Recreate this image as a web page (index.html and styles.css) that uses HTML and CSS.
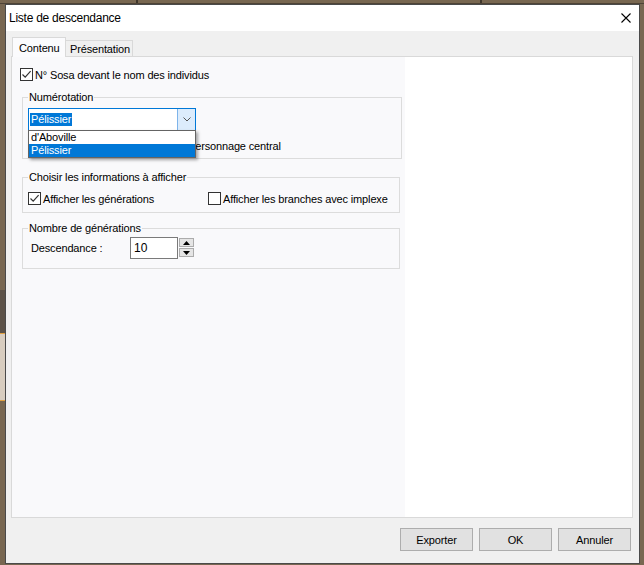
FILE: index.html
```html
<!DOCTYPE html>
<html lang="fr">
<head>
<meta charset="utf-8">
<title>Liste de descendance</title>
<link rel="stylesheet" href="styles.css">
</head>
<body>
<div class="dialog">
  <div class="titlebar">
    <span class="title">Liste de descendance</span>
    <svg class="close" width="10" height="10" viewBox="0 0 10 10"><path d="M0.5 0.5 L9.5 9.5 M9.5 0.5 L0.5 9.5" stroke="#000" stroke-width="1.1" fill="none"/></svg>
  </div>
  <div class="body">
    <div class="tabs">
      <div class="tab active">Contenu</div>
      <div class="tab">Présentation</div>
    </div>
    <div class="page">
      <div class="panel">
        <div class="row top-row">
          <span class="cb"><svg width="11" height="11" viewBox="0 0 11 11"><path d="M1.5 5.5 L4.2 8.2 L9.6 2.2" stroke="#333" stroke-width="1.2" fill="none"/></svg></span>
          <span class="lbl">N° Sosa devant le nom des individus</span>
        </div>

        <div class="group g1">
          <span class="legend">Numérotation</span>
          <div class="combo">
            <div class="combo-field"><span class="sel">Pélissier</span></div>
            <div class="combo-btn"><svg width="8" height="5" viewBox="0 0 8 5"><path d="M0.5 0.5 L4 4 L7.5 0.5" stroke="#555" stroke-width="1" fill="none"/></svg></div>
            <ul class="dropdown">
              <li>d'Aboville</li>
              <li class="hl">Pélissier</li>
            </ul>
          </div>
          <div class="row g1-row">
            <span class="cb"></span>
            <span class="lbl">Numéroter la descendance du personnage central</span>
          </div>
        </div>

        <div class="group g2">
          <span class="legend">Choisir les informations à afficher</span>
          <div class="row g2-row">
            <div class="opt first">
              <span class="cb"><svg width="11" height="11" viewBox="0 0 11 11"><path d="M1.5 5.5 L4.2 8.2 L9.6 2.2" stroke="#333" stroke-width="1.2" fill="none"/></svg></span>
              <span class="lbl">Afficher les générations</span>
            </div>
            <div class="opt">
              <span class="cb"></span>
              <span class="lbl">Afficher les branches avec implexe</span>
            </div>
          </div>
        </div>

        <div class="group g3">
          <span class="legend">Nombre de générations</span>
          <div class="g3-row">
            <span class="field-lbl">Descendance :</span>
            <div class="num">10</div>
            <div class="spin">
              <div class="spin-btn"><svg width="7" height="4" viewBox="0 0 7 4"><path d="M0 4 L3.5 0 L7 4 Z" fill="#000"/></svg></div>
              <div class="spin-btn"><svg width="7" height="4" viewBox="0 0 7 4"><path d="M0 0 L3.5 4 L7 0 Z" fill="#000"/></svg></div>
            </div>
          </div>
        </div>
      </div>
      <div class="blank"></div>
    </div>
    <div class="buttons">
      <div class="btn">Exporter</div>
      <div class="btn">OK</div>
      <div class="btn">Annuler</div>
    </div>
  </div>
</div>
</body>
</html>
```

FILE: styles.css
```css
html, body {
  margin: 0;
  padding: 0;
}
body {
  width: 644px;
  height: 565px;
  overflow: hidden;
  background-color: #786751;
  background-image:
    linear-gradient(to bottom, transparent 0, transparent 3px, #4e4336 3px, #4e4336 4px, transparent 4px),
    linear-gradient(to right, transparent 136px, #3f362b 136px, #3f362b 138px, transparent 138px, transparent 480px, #3f362b 480px, #3f362b 482px, transparent 482px),
    linear-gradient(to bottom, transparent 290px, #5c5248 290px, #5c5248 333px, #e0a040 333px, #e0a040 334px, #d8cdbf 334px, #d8cdbf 400px, #e0a040 400px, #e0a040 401px, transparent 401px);
  background-size: 644px 5px, 644px 4px, 5px 565px;
  background-repeat: no-repeat;
  font-family: "Liberation Sans", Arial, sans-serif;
  font-size: 11px;
  color: #000;
}
.dialog {
  margin: 4px 0 0 5px;
  width: 635px;
  height: 560px;
  box-sizing: border-box;
  border: 1px solid #4a4a4a;
  background: #f0f0f0;
  display: flex;
  flex-direction: column;
}
.titlebar {
  height: 26px;
  flex: none;
  background: #fff;
  display: flex;
  align-items: center;
  padding-left: 3px;
}
.title {
  font-size: 12px;
  letter-spacing: -0.25px;
}
.close {
  margin-left: auto;
  margin-right: 8px;
}
.body {
  flex: 1;
  display: flex;
  flex-direction: column;
  padding: 6px 6px 0 5px;
}
.tabs {
  display: flex;
  align-items: flex-end;
  height: 20px;
  padding-left: 1px;
  margin-bottom: -1px;
  position: relative;
  z-index: 2;
}
.tab {
  box-sizing: border-box;
  display: flex;
  align-items: center;
  letter-spacing: -0.15px;
}
.tab.active {
  width: 54px;
  height: 20px;
  border: 1px solid #d9d9d9;
  border-bottom: none;
  background: #fbfbfd;
  padding-left: 6px;
}
.tab:not(.active) {
  width: 67px;
  height: 17px;
  border: 1px solid #d9d9d9;
  border-left: none;
  background: #f0f0f0;
  padding-left: 4px;
}
.page {
  height: 462px;
  flex: none;
  box-sizing: border-box;
  border: 1px solid #d9d9d9;
  background: #fff;
  display: flex;
  position: relative;
  z-index: 1;
}
.panel {
  width: 393px;
  background: #f9f9fb;
  padding: 11px 0 0 8px;
  box-sizing: border-box;
}
.blank {
  flex: 1;
}
.row {
  display: flex;
  align-items: center;
  height: 13px;
}
.cb {
  width: 13px;
  height: 13px;
  box-sizing: border-box;
  border: 1px solid #333;
  background: #fff;
  flex: none;
  display: flex;
  align-items: center;
  justify-content: center;
}
.lbl {
  margin-left: 2px;
  letter-spacing: -0.15px;
  white-space: nowrap;
}
.group {
  border: 1px solid #dcdcdc;
  margin-left: 2px;
  box-sizing: border-box;
}
.legend {
  display: block;
  width: fit-content;
  height: 13px;
  line-height: 13px;
  margin: -7px 0 0 5px;
  padding: 0 1px;
  background: #f9f9fb;
  letter-spacing: -0.15px;
}
.g1 {
  width: 380px;
  height: 62px;
  margin-top: 16px;
}
.combo {
  position: relative;
  width: 168px;
  height: 23px;
  margin: 4px 0 0 5px;
  box-sizing: border-box;
  border: 1px solid #0078d7;
  background: #fff;
  display: flex;
}
.combo-field {
  flex: 1;
  display: flex;
  align-items: center;
  padding-left: 1px;
}
.sel {
  background: #0078d7;
  color: #fff;
  height: 13px;
  line-height: 13px;
  padding: 0 1px;
  letter-spacing: -0.15px;
}
.combo-btn {
  width: 17px;
  background: #dcecfc;
  border-left: 1px solid #7eb4ea;
  display: flex;
  align-items: center;
  justify-content: center;
}
.dropdown {
  position: absolute;
  top: 100%;
  left: -1px;
  width: 168px;
  margin: 0;
  padding: 0;
  list-style: none;
  box-sizing: border-box;
  border: 1px solid #646464;
  background: #fff;
  box-shadow: 2px 2px 3px rgba(0, 0, 0, 0.35);
  z-index: 5;
}
.dropdown li {
  height: 13px;
  line-height: 13px;
  padding-left: 2px;
  letter-spacing: -0.15px;
}
.dropdown li.hl {
  background: #0078d7;
  color: #fff;
}
.g1-row {
  margin: 8px 0 0 5px;
}
.g2 {
  width: 378px;
  height: 36px;
  margin-top: 18px;
}
.g2-row {
  margin: 8px 0 0 5px;
}
.opt {
  display: flex;
  align-items: center;
}
.opt.first {
  width: 180px;
}
.g3 {
  width: 378px;
  height: 41px;
  margin-top: 15px;
}
.g3-row {
  display: flex;
  align-items: flex-start;
  margin: 2px 0 0 8px;
  height: 22px;
}
.field-lbl {
  width: 99px;
  line-height: 22px;
  letter-spacing: -0.15px;
}
.num {
  width: 48px;
  height: 22px;
  box-sizing: border-box;
  border: 1px solid #7a7a7a;
  background: #fff;
  padding-left: 3px;
  line-height: 20px;
  font-size: 12px;
}
.spin {
  margin: 1px 0 0 1px;
  display: flex;
  flex-direction: column;
  gap: 1px;
}
.spin-btn {
  width: 15px;
  height: 9px;
  box-sizing: border-box;
  border: 1px solid #acacac;
  background: #e5e5e5;
  display: flex;
  align-items: center;
  justify-content: center;
}
.buttons {
  display: flex;
  justify-content: flex-end;
  gap: 6px;
  margin-top: 10px;
  padding-right: 2px;
}
.btn {
  width: 73px;
  height: 23px;
  box-sizing: border-box;
  border: 1px solid #adadad;
  background: #e1e1e1;
  display: flex;
  align-items: center;
  justify-content: center;
  letter-spacing: -0.15px;
}
```
